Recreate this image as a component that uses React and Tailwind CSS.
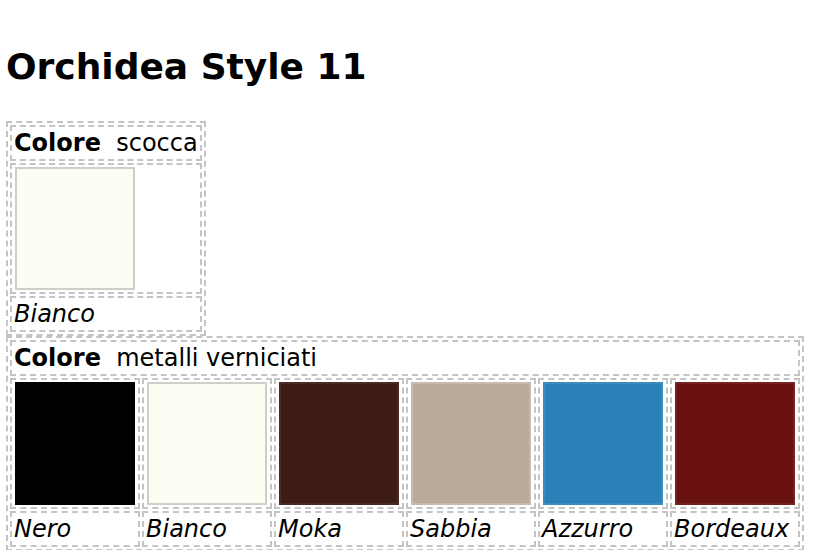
import React from 'react';

const colori = [
    { nome: 'Nero', colore: 'bg-[#000000] border-[#000000]' },
    { nome: 'Bianco', colore: 'bg-[#fdfdf3] border-[#cfcfc8]' },
    { nome: 'Moka', colore: 'bg-[#3d1c16] border-[#4a2a24]' },
    { nome: 'Sabbia', colore: 'bg-[#b9ab9a] border-[#c6bbae]' },
    { nome: 'Azzurro', colore: 'bg-[#2a81b8] border-[#3a8cc0]' },
    { nome: 'Bordeaux', colore: 'bg-[#6a1212] border-[#752222]' },
];

const bordo = 'border-2 border-dashed border-[#c4c4c4] align-top';
const testo = `${bordo} px-[2px] py-[3px]`;

const Intestazione = ({ children, span }) => (
    <tr>
        <td colSpan={span} className={`${testo} whitespace-nowrap`}>
            <b>Colore</b>{'\u00a0 '}{children}
        </td>
    </tr>
);

const Campione = ({ colore }) => (
    <td className={`${bordo} px-[3px] py-[2px]`}>
        <div className={`w-[120px] h-[123px] border-2 ${colore}`} />
    </td>
);

const App = () => {
    return (
        <div className="min-h-[550px] bg-white text-black pl-[6px] pr-[5px] pt-[46px] font-['DejaVu_Sans',Verdana,sans-serif]">
            <h2 className="text-[36px] leading-[42px] font-bold mb-[33px]">Orchidea Style 11</h2>

            <table className="border-separate border-spacing-[2px] border-2 border-dashed border-[#c4c4c4] text-[24px] leading-[26px]">
                <tbody>
                    <Intestazione>scocca</Intestazione>
                    <tr>
                        <Campione colore="bg-[#fdfdf3] border-[#cfcfc8]" />
                    </tr>
                    <tr>
                        <td className={`${testo} italic`}>Bianco</td>
                    </tr>
                </tbody>
            </table>

            <table className="border-separate border-spacing-[2px] border-2 border-dashed border-[#c4c4c4] text-[24px] leading-[26px]">
                <tbody>
                    <Intestazione span={6}>metalli verniciati</Intestazione>
                    <tr>
                        {colori.map((c) => (
                            <Campione key={c.nome} colore={c.colore} />
                        ))}
                    </tr>
                    <tr>
                        {colori.map((c) => (
                            <td key={c.nome} className={`${testo} italic`}>{c.nome}</td>
                        ))}
                    </tr>
                </tbody>
            </table>
        </div>
    );
};

export default App;
